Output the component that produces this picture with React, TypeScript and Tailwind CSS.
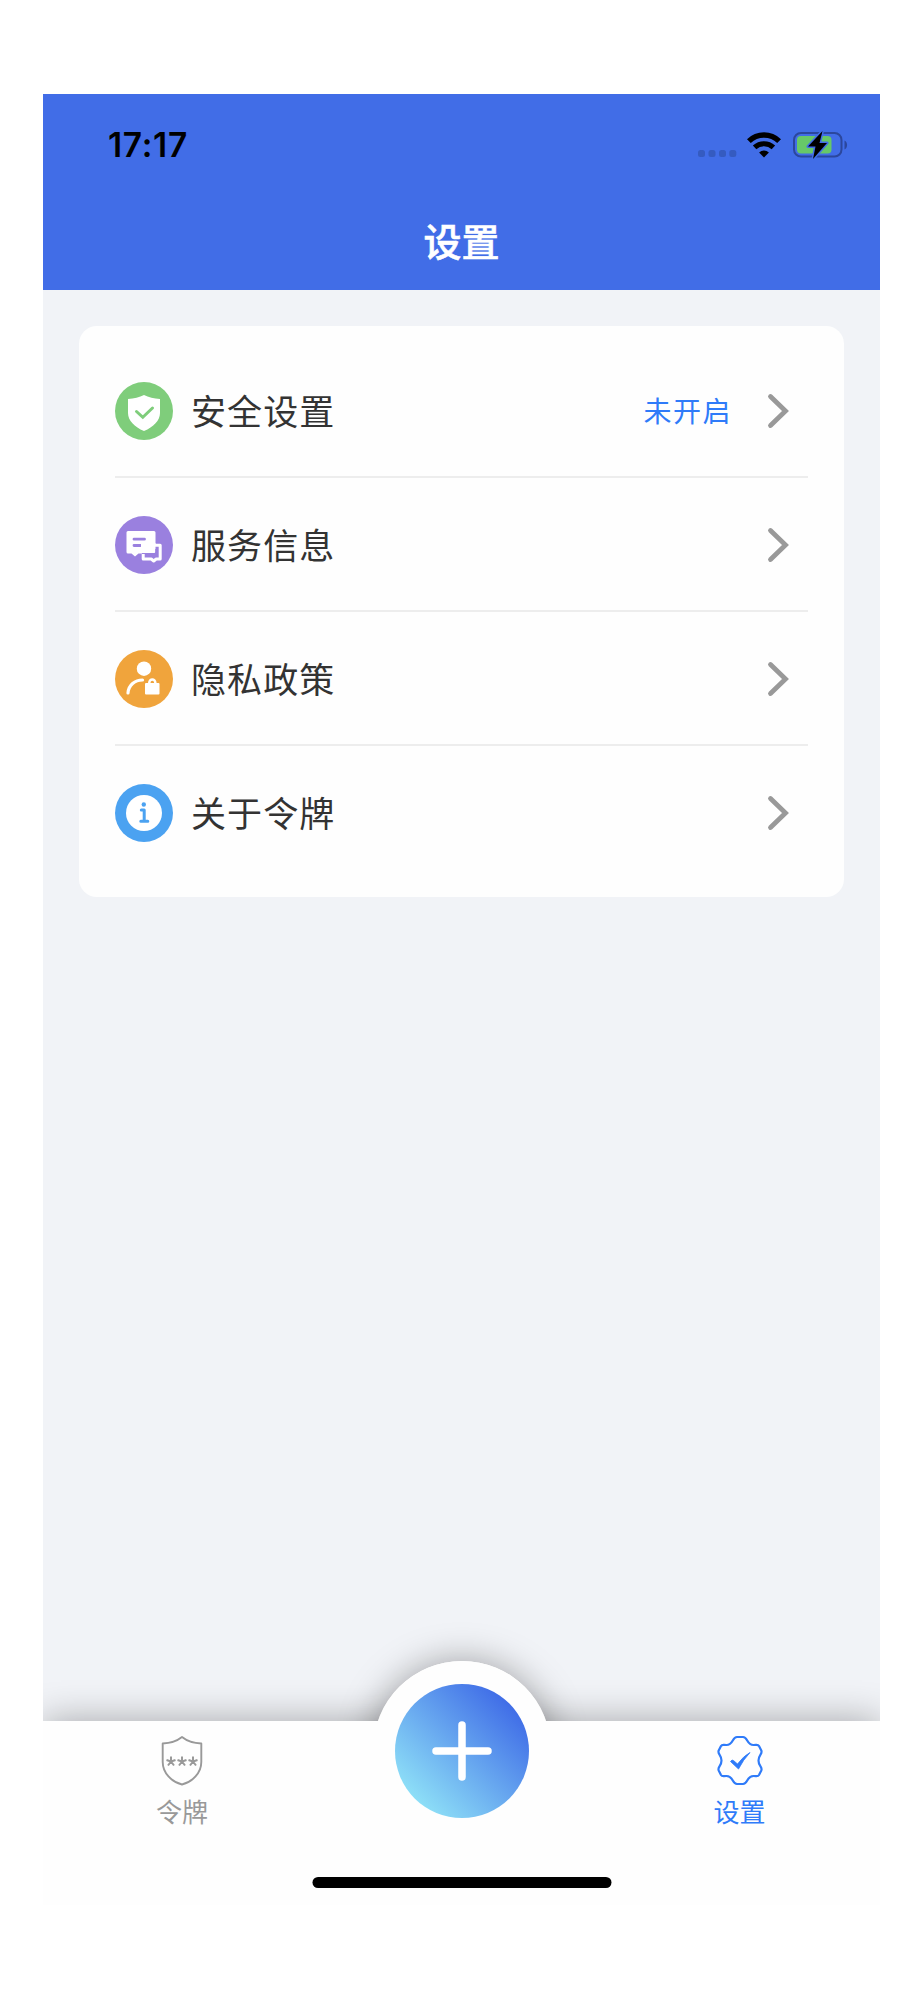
import type { ReactNode } from 'react';

interface MenuItem {
  label: string;
  icon: ReactNode;
  status?: string;
}

const ShieldIcon = () => (
  <svg viewBox="0 0 58 58" className="size-[58px] shrink-0">
    <circle cx="29" cy="29" r="29" fill="#7fcd7b" />
    <path
      d="M29 13c4.500 2.400 10 3.700 16 4v14c0 7.500-6.500 14-16 18c-9.500-4-16-10.500-16-18V17c6-.3 11.500-1.600 16-4z"
      fill="#fff"
    />
    <path d="M21.500 29.500l6.300 5.800l9.700-9.300" fill="none" stroke="#7fcd7b" strokeWidth="3" strokeLinecap="round" />
  </svg>
);

const ChatIcon = () => (
  <svg viewBox="0 0 58 58" className="size-[58px] shrink-0">
    <circle cx="29" cy="29" r="29" fill="#9a80df" />
    <path
      d="M13 15h26a1.500 1.500 0 0 1 1.500 1.500V28H27v9.500h-3.500l-3.500 3l-3.500-3H13a1.500 1.500 0 0 1-1.500-1.500V16.500A1.500 1.500 0 0 1 13 15z"
      fill="#fff"
    />
    <path d="M19 23.200h10.500M19 29.500h6.500" stroke="#9a80df" strokeWidth="2.800" strokeLinecap="round" />
    <path d="M40 29.300h5.200v13.700h-4l-2.500 2l-2.500-2h-8v-5" fill="none" stroke="#fff" strokeWidth="3" strokeLinejoin="round" />
    <path d="M26 37V27h14.500v8.500a1.500 1.500 0 0 1-1.500 1.500z" fill="#fff" />
    <path d="M30 38.500h11.500V33" fill="none" stroke="#9a80df" strokeWidth="2.400" />
  </svg>
);

const PrivacyIcon = () => (
  <svg viewBox="0 0 58 58" className="size-[58px] shrink-0">
    <circle cx="29" cy="29" r="29" fill="#f0a43c" />
    <circle cx="29" cy="18.700" r="7.200" fill="#fff" />
    <path d="M13 43c.5-8 7-13 14.500-13" fill="none" stroke="#fff" strokeWidth="3.200" strokeLinecap="round" />
    <rect x="30" y="33" width="14.500" height="11.500" rx="1" fill="#fff" />
    <path d="M34.300 34v-1.500a3 3 0 0 1 6 0V34" fill="none" stroke="#fff" strokeWidth="2.500" />
  </svg>
);

const AboutIcon = () => (
  <svg viewBox="0 0 58 58" className="size-[58px] shrink-0">
    <circle cx="29" cy="29" r="29" fill="#4ba2f1" />
    <circle cx="29" cy="29" r="18" fill="#fff" />
    <circle cx="28.800" cy="20.500" r="2.200" fill="#4ba2f1" />
    <path d="M26.300 26h2.900v10.600M25.800 37.200h7" fill="none" stroke="#4ba2f1" strokeWidth="3" strokeLinecap="round" strokeLinejoin="round" />
  </svg>
);

const menuItems: MenuItem[] = [
  { label: '安全设置', icon: <ShieldIcon />, status: '未开启' },
  { label: '服务信息', icon: <ChatIcon /> },
  { label: '隐私政策', icon: <PrivacyIcon /> },
  { label: '关于令牌', icon: <AboutIcon /> },
];

function StatusBar() {
  return (
    <div className="flex h-[102px] items-center justify-between pl-[65px] pr-[31px]">
      <span className="pt-[2px] font-['Inter',sans-serif] text-[33.500px] leading-none font-semibold tracking-[0.700px] text-black">
        17:17
      </span>
      <div className="flex items-center">
        <svg width="40" height="34" viewBox="0 0 40 34" fill="#355bc0">
          <rect x="0" y="22" width="7" height="7" rx="2.500" />
          <rect x="10.500" y="22" width="7" height="7" rx="2.500" />
          <rect x="21" y="22" width="7" height="7" rx="2.500" />
          <rect x="31.300" y="22" width="7" height="7" rx="2.500" />
        </svg>
        <svg width="34" height="26" viewBox="0 0 34 26" className="ml-[9px]">
          <path d="M1.900 9.200a21.500 21.500 0 0 1 30.200 0" fill="none" stroke="#000" strokeWidth="5.400" />
          <path d="M7.600 15.400a13.600 13.600 0 0 1 18.800 0" fill="none" stroke="#000" strokeWidth="5" />
          <path d="M17 25.500l-4.900-5a7 7 0 0 1 9.800 0z" fill="#000" />
        </svg>
        <svg width="56" height="28" viewBox="0 0 56 28" className="ml-[12px]">
          <rect x="1" y="2" width="47.500" height="23.500" rx="7" fill="none" stroke="#2b479d" strokeWidth="2" />
          <path d="M51.500 9.500c3.400 1.500 3.400 7.500 0 9z" fill="#2b479d" />
          <rect x="4" y="5" width="34.500" height="17.500" rx="4" fill="#67c868" />
          <path
            d="M29.500 0L15 15.500h7.500L20 28L34 12h-7.500z"
            fill="#000"
            stroke="#416de7"
            strokeWidth="3"
            strokeLinejoin="round"
            paintOrder="stroke"
          />
        </svg>
      </div>
    </div>
  );
}

function MenuRow({ item, last }: { item: MenuItem; last: boolean }) {
  return (
    <div
      className={
        last
          ? 'flex h-[134px] items-center border-b-2 border-transparent pt-px pr-[18px]'
          : 'flex h-[134px] items-center border-b-2 border-[#ededed] pt-px pr-[18px]'
      }
    >
      {item.icon}
      <span className="ml-[18px] flex-1 pb-[3px] text-[35px] leading-none tracking-[1.100px] text-[#333]">
        {item.label}
      </span>
      {item.status && (
        <span className="mr-[34px] pb-[2px] text-[28px] leading-none tracking-[1.500px] text-[#2f7bf9]">{item.status}</span>
      )}
      <svg width="24" height="36" viewBox="0 0 24 36" fill="none">
        <path d="M4.500 3.500L19.500 18L4.500 32.500" stroke="#999" strokeWidth="4.800" strokeLinecap="round" />
      </svg>
    </div>
  );
}

function TabBar() {
  return (
    <div className="relative h-[184px]">
      {/* shadow of the bump, kept below the bar */}
      <div className="absolute -top-[60px] left-1/2 size-[178px] -translate-x-1/2 rounded-full bg-white shadow-[0_0_36px_rgba(0,0,0,0.35)]" />
      <div className="absolute inset-0 bg-[#fefefe] shadow-[0_0_36px_rgba(0,0,0,0.32)]" />
      <div className="absolute -top-[60px] left-1/2 size-[178px] -translate-x-1/2 rounded-full bg-[#fefefe]" />

      <div className="relative grid grid-cols-3">
        <button className="flex flex-col items-center pt-[14px] pr-px text-[#999]">
          <svg width="44" height="51" viewBox="0 0 44 51" fill="none" stroke="currentColor">
            <path
              d="M22 2c5 4 11.500 6.200 19.300 6.500V27c0 11-9 20-19.300 22.500C11.700 47 2.700 38 2.700 27V8.500C10.500 8.200 17 6 22 2z"
              strokeWidth="1.900"
              strokeLinejoin="round"
            />
            <path
              d="M11 26.500v-5M11 26.500l-4.500-1.500M11 26.500l4.500-1.500M11 26.500l-3 4M11 26.500l3 4M22 26.500v-5M22 26.500l-4.500-1.500M22 26.500l4.500-1.500M22 26.500l-3 4M22 26.500l3 4M33 26.500v-5M33 26.500l-4.500-1.500M33 26.500l4.500-1.500M33 26.500l-3 4M33 26.500l3 4"
              strokeWidth="2"
            />
          </svg>
          <span className="mt-[12px] text-[26px] leading-none">令牌</span>
        </button>

        <div className="flex justify-center">
          <button className="relative -top-[37px] size-[134px] rounded-full bg-linear-to-tr/srgb from-[#92e6f8] from-10% to-[#3b66e6] to-90%">
            <svg viewBox="0 0 134 134" className="size-[134px]">
              <path d="M67 41v52M41 67h52" stroke="#fff" strokeWidth="7.500" strokeLinecap="round" />
            </svg>
          </button>
        </div>

        <button className="flex flex-col items-center pt-[14px] pr-[2px] text-[#2f7bf9]">
          <svg width="46" height="51" viewBox="0 0 46 51" fill="none" stroke="currentColor">
            <path
              d="M20 2h6c5 0 3.500 8 10.500 8c3.500 0 4.500-.8 5.500 1l2.300 4.500c1.500 3.500-2.800 4-2.800 10s4.300 6.500 2.800 10L42 40c-1 1.800-2 1-5.500 1c-7 0-5.500 8-10.500 8h-6c-5 0-3.500-8-10.500-8c-3.500 0-4.500.8-5.500-1l-2.300-4.500c-1.500-3.500 2.800-4 2.800-10s-4.300-6.500-2.800-10L4 11c1-1.800 2-1 5.500-1c7 0 5.500-8 10.500-8z"
              strokeWidth="2.200"
              strokeLinejoin="round"
            />
            <path d="M13.500 26.500q1.500-2.500 3-1l4 3.500q6-8 12.500-11.500q-7 7.500-11.500 16.500z" fill="currentColor" strokeWidth="0.800" />
          </svg>
          <span className="mt-[12px] text-[26px] leading-none">设置</span>
        </button>
      </div>

      <div className="absolute bottom-[17px] left-1/2 h-[11px] w-[299px] -translate-x-1/2 rounded-full bg-black" />
    </div>
  );
}

export default function App() {
  return (
    <div className="h-[2000px] bg-white pt-[94px] pr-[44px] pl-[43px] font-['Noto_Sans_CJK_SC',sans-serif]">
      <div className="flex h-[1811px] flex-col overflow-hidden bg-[#f1f3f7]">
        <header className="h-[196px] shrink-0 bg-[#416de7]">
          <StatusBar />
          <h1 className="pt-[25px] text-center text-[38px] leading-none font-medium text-white [-webkit-text-stroke:0.600px_white]">
            设置
          </h1>
        </header>
        <main className="flex-1 px-9 pt-9">
          <div className="rounded-[18px] bg-[#fefefe] px-9 pt-[18px] pb-[17px]">
            {menuItems.map((item, i) => (
              <MenuRow key={item.label} item={item} last={i === menuItems.length - 1} />
            ))}
          </div>
        </main>
        <TabBar />
      </div>
    </div>
  );
}
